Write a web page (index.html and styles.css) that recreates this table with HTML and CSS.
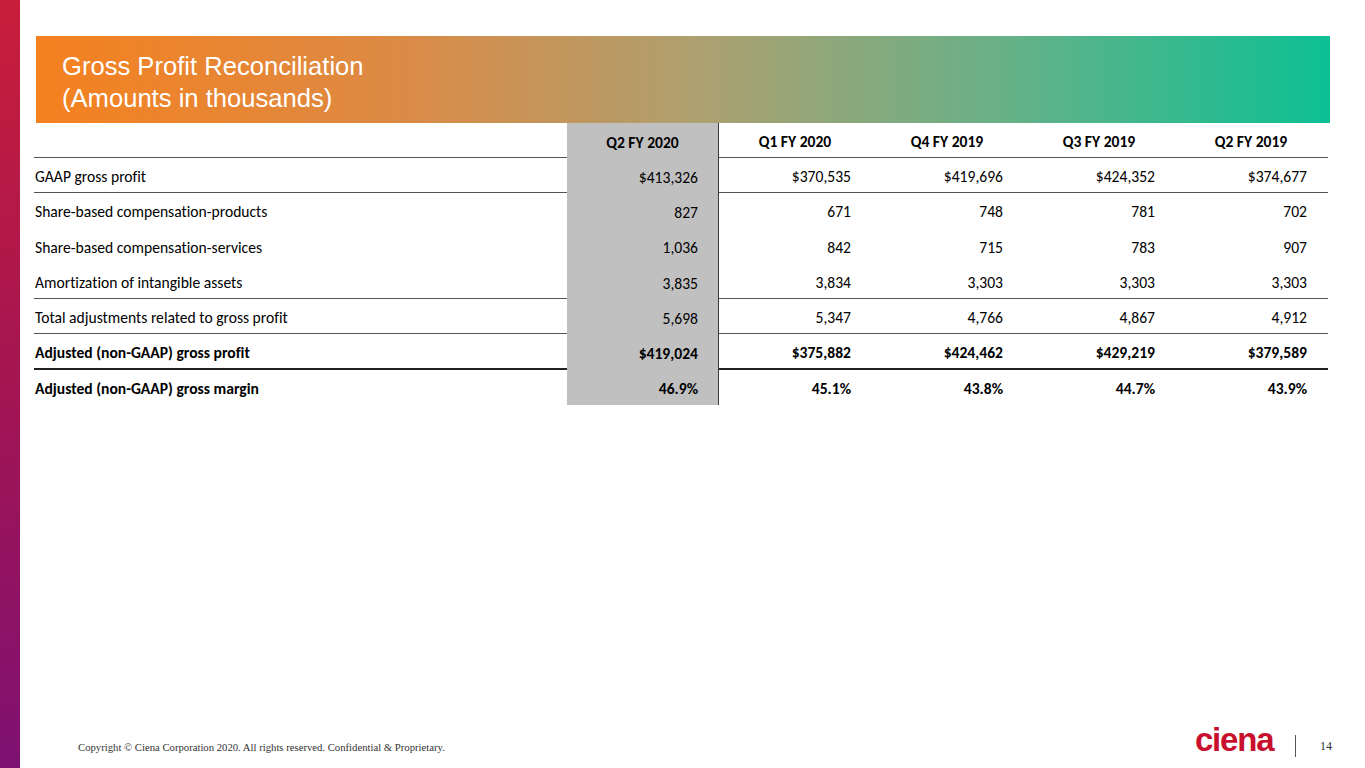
FILE: index.html
```html
<!DOCTYPE html>
<html lang="en">
<head>
<meta charset="utf-8">
<title>Gross Profit Reconciliation</title>
<link rel="stylesheet" href="styles.css">
</head>
<body>
<div class="slide">
  <div class="side-bar"></div>
  <div class="content">
    <div class="banner">
      <h1 class="title">Gross Profit Reconciliation<br>(Amounts in thousands)</h1>
    </div>
    <div class="table">
      <div class="row head line">
        <div class="cell label"></div>
        <div class="cell hl">Q2 FY 2020</div>
        <div class="cell">Q1 FY 2020</div>
        <div class="cell">Q4 FY 2019</div>
        <div class="cell">Q3 FY 2019</div>
        <div class="cell">Q2 FY 2019</div>
      </div>
      <div class="row line">
        <div class="cell label">GAAP gross profit</div>
        <div class="cell hl num">$413,326</div>
        <div class="cell num">$370,535</div>
        <div class="cell num">$419,696</div>
        <div class="cell num">$424,352</div>
        <div class="cell num">$374,677</div>
      </div>
      <div class="row">
        <div class="cell label">Share-based compensation-products</div>
        <div class="cell hl num">827</div>
        <div class="cell num">671</div>
        <div class="cell num">748</div>
        <div class="cell num">781</div>
        <div class="cell num">702</div>
      </div>
      <div class="row">
        <div class="cell label">Share-based compensation-services</div>
        <div class="cell hl num">1,036</div>
        <div class="cell num">842</div>
        <div class="cell num">715</div>
        <div class="cell num">783</div>
        <div class="cell num">907</div>
      </div>
      <div class="row line">
        <div class="cell label">Amortization of intangible assets</div>
        <div class="cell hl num">3,835</div>
        <div class="cell num">3,834</div>
        <div class="cell num">3,303</div>
        <div class="cell num">3,303</div>
        <div class="cell num">3,303</div>
      </div>
      <div class="row line">
        <div class="cell label">Total adjustments related to gross profit</div>
        <div class="cell hl num">5,698</div>
        <div class="cell num">5,347</div>
        <div class="cell num">4,766</div>
        <div class="cell num">4,867</div>
        <div class="cell num">4,912</div>
      </div>
      <div class="row bold thick">
        <div class="cell label">Adjusted (non-GAAP) gross profit</div>
        <div class="cell hl num">$419,024</div>
        <div class="cell num">$375,882</div>
        <div class="cell num">$424,462</div>
        <div class="cell num">$429,219</div>
        <div class="cell num">$379,589</div>
      </div>
      <div class="row bold">
        <div class="cell label">Adjusted (non-GAAP) gross margin</div>
        <div class="cell hl num">46.9%</div>
        <div class="cell num">45.1%</div>
        <div class="cell num">43.8%</div>
        <div class="cell num">44.7%</div>
        <div class="cell num">43.9%</div>
      </div>
    </div>
    <div class="footer">
      <div class="copyright">Copyright &copy; Ciena Corporation 2020. All rights reserved. Confidential &amp; Proprietary.</div>
      <div class="brand">
        <span class="logo">ciena<span class="reg">.</span></span>
        <span class="divider"></span>
        <span class="page-num">14</span>
      </div>
    </div>
  </div>
</div>
</body>
</html>
```
FILE: styles.css
```css
* { box-sizing: border-box; }
html, body { margin: 0; padding: 0; background: #fff; }
.slide {
  width: 1365px;
  height: 768px;
  display: flex;
  overflow: hidden;
}
.side-bar {
  width: 20px;
  flex: none;
  background: linear-gradient(to bottom, #c81e3a 0%, #a41552 50%, #7e1172 100%);
}
.content {
  flex: 1;
  display: flex;
  flex-direction: column;
  padding-top: 36px;
}
.banner {
  margin-left: 16px;
  width: 1294px;
  height: 87px;
  padding: 14px 26px 0;
  background: linear-gradient(to right, #f5811f 0%, #dc8a45 28%, #aea070 51%, #6ab087 74%, #0dc094 100%);
}
.title {
  margin: 0;
  font-family: "Liberation Sans", Arial, sans-serif;
  font-weight: normal;
  font-size: 25.6px;
  line-height: 32px;
  color: #fff;
}
.table {
  margin-left: 14px;
  width: 1294px;
  font-family: Carlito, "Liberation Sans Narrow", "Open Sans", sans-serif;
  font-size: 15.6px;
  font-variant-ligatures: none;
  color: #000;
}
.row {
  display: grid;
  grid-template-columns: 533px repeat(5, 152px);
  height: 35.3px;
  border-bottom: 1px solid transparent;
}
.row.head { height: 35px; font-weight: bold; }
.row.line { border-bottom-color: #555; }
.row.thick { border-bottom: 2px solid #222; }
.row.bold { font-weight: bold; }
.cell {
  display: flex;
  align-items: center;
  justify-content: center;
  white-space: nowrap;
  padding-top: 3px;
}
.cell.label { justify-content: flex-start; padding-left: 1px; }
.cell.num { justify-content: flex-end; padding-right: 20px; }
.cell.hl {
  background: #c0c0c0;
  border-right: 1px solid #3a3a3a;
  margin-bottom: -1px;
}
.row.thick .cell.hl { margin-bottom: -2px; }
.footer {
  margin-top: auto;
  height: 56px;
  display: flex;
  align-items: flex-start;
  justify-content: space-between;
  padding: 6px 33px 0 58px;
}
.copyright {
  font-family: "Liberation Serif", "Times New Roman", serif;
  font-size: 10.7px;
  color: #333;
  padding-top: 23px;
}
.brand {
  display: flex;
  align-items: center;
}
.logo {
  font-family: "Liberation Sans", Arial, sans-serif;
  font-weight: bold;
  font-size: 33px;
  letter-spacing: -1.2px;
  color: #c8102e;
  line-height: 36px;
  margin-top: 4px;
  margin-right: 2px;
}
.reg { font-size: 6px; letter-spacing: 0; }
.divider {
  width: 1px;
  height: 22px;
  background: #555;
  margin: 6px 24px 0 18px;
}
.page-num {
  font-family: "Liberation Serif", "Times New Roman", serif;
  font-size: 12px;
  color: #333;
  padding-top: 8px;
}
```
